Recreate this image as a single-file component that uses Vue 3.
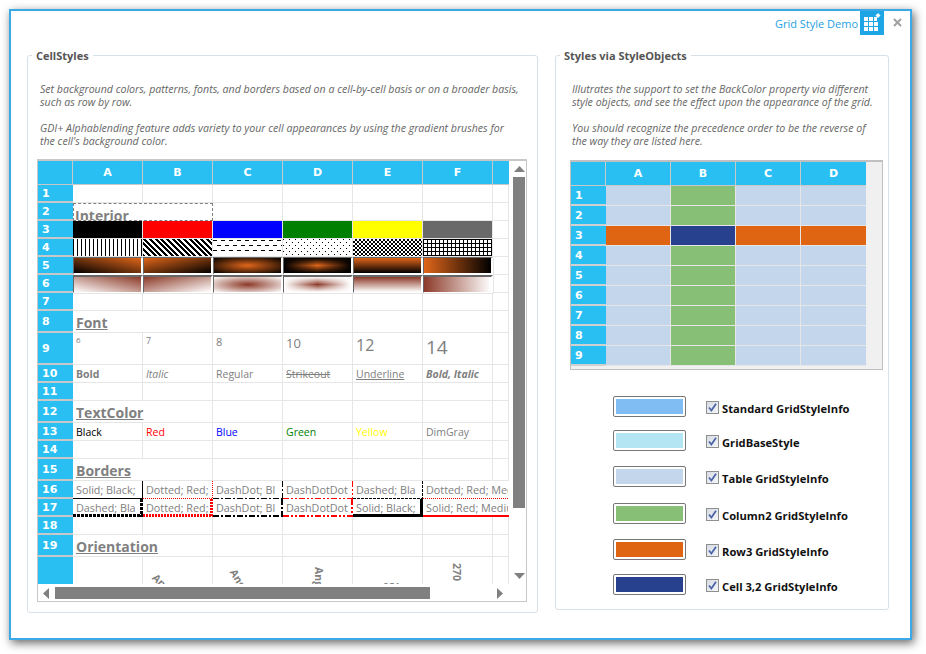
<template>
  <div class="page">
    <div class="window">
      <header class="title-bar">
        <span class="title">Grid Style Demo</span>
        <span class="title-icon">
          <svg width="24" height="24" viewBox="0 0 24 24">
            <g fill="#fff">
              <rect x="4" y="6" width="4" height="4" />
              <rect x="9" y="6" width="4" height="4" />
              <rect x="14" y="6" width="3" height="4" />
              <rect x="4" y="11" width="4" height="4" />
              <rect x="9" y="11" width="4" height="4" />
              <rect x="14" y="11" width="4" height="4" />
              <rect x="4" y="16" width="4" height="4" />
              <rect x="9" y="16" width="4" height="4" />
              <rect x="14" y="16" width="4" height="4" />
              <path d="M18 2l2.5 2.5-2.5 2.5-2.5-2.5z" />
            </g>
          </svg>
        </span>
        <svg class="close" width="9" height="9" viewBox="0 0 9 9">
          <path d="M1 1l7 7M8 1l-7 7" stroke="#a0a0a0" stroke-width="2" />
        </svg>
      </header>

      <div class="content">
        <fieldset class="group group-left">
          <legend>CellStyles</legend>
          <p class="note">Set background colors, patterns, fonts, and borders based on a cell-by-cell basis or on a broader basis,<br />such as row by row.</p>
          <p class="note">GDI+ Alphablending feature adds variety to your cell appearances by using the gradient brushes for<br />the cell's background color.</p>

          <div class="sheet">
            <div class="viewport">
              <div class="row head-row">
                <div class="corner"></div>
                <div v-for="col in sheetCols" :key="col" class="col-head">{{ col }}</div>
              </div>
              <div v-for="row in sheetRows" :key="row.n" class="row" :style="{ height: row.h + 'px' }">
                <div class="row-head">{{ row.n }}</div>
                <div
                  v-for="(cell, i) in row.cells"
                  :key="i"
                  class="cell"
                  :class="[cell.cls, { wide: cell.span }]"
                >
                  <span v-if="cell.angle" class="angle" :class="cell.angle">{{ cell.text }}</span>
                  <template v-else>{{ cell.text }}</template>
                </div>
              </div>
            </div>
            <div class="vscroll">
              <svg class="arrow-svg" width="11" height="6" viewBox="0 0 11 6"><path d="M5.5 0L11 6H0z" fill="#808080" /></svg>
              <div class="vthumb"></div>
              <svg class="arrow-svg down" width="11" height="6" viewBox="0 0 11 6"><path d="M5.5 6L11 0H0z" fill="#808080" /></svg>
            </div>
            <div class="hscroll">
              <svg width="6" height="11" viewBox="0 0 6 11"><path d="M0 5.5L6 0v11z" fill="#808080" /></svg>
              <div class="hthumb"></div>
              <svg class="right" width="6" height="11" viewBox="0 0 6 11"><path d="M6 5.5L0 0v11z" fill="#808080" /></svg>
            </div>
          </div>
        </fieldset>

        <fieldset class="group group-right">
          <legend>Styles via StyleObjects</legend>
          <p class="note">Illutrates the support to set the BackColor property via different<br />style objects, and see the effect upon the appearance of the grid.</p>
          <p class="note">You should recognize the precedence order to be the reverse of<br />the way they are listed here.</p>

          <div class="mini">
            <div class="mini-row mini-head">
              <div class="mini-corner"></div>
              <div v-for="col in miniCols" :key="col" class="mini-col">{{ col }}</div>
            </div>
            <div v-for="n in 9" :key="n" class="mini-row">
              <div class="mini-num">{{ n }}</div>
              <div
                v-for="(col, i) in miniCols"
                :key="col"
                class="mini-cell"
                :class="miniClass(n, i)"
              ></div>
            </div>
          </div>

          <ul class="legend-list">
            <li v-for="item in styleItems" :key="item.label" class="legend-row">
              <span class="swatch"><span class="swatch-fill" :style="{ background: item.color }"></span></span>
              <span class="check">
                <svg width="13" height="13" viewBox="0 0 13 13">
                  <path d="M3 6.5l2.4 3L10 2.8" fill="none" stroke="#4c64a8" stroke-width="1.8" />
                </svg>
              </span>
              <span class="legend-label">{{ item.label }}</span>
            </li>
          </ul>
        </fieldset>
      </div>
    </div>
  </div>
</template>

<script setup>
const sheetCols = ["A", "B", "C", "D", "E", "F", ""];
const miniCols = ["A", "B", "C", "D"];

function line(cls, texts = []) {
  const cells = [];
  for (let i = 0; i < 7; i++) {
    cells.push({ text: texts[i] || "", cls: cls[i] || "" });
  }
  return cells;
}

function titleRow(text, cls = "title-cell") {
  return [
    { text, cls, span: true },
    ...line([]).slice(0, 5)
  ];
}

// the last column of the border rows runs on into the clipped column G
function borderRow(cls, texts) {
  const cells = line(cls, texts).slice(0, 6);
  cells[5].span = true;
  return cells;
}

const sheetRows = [
  { n: 1, h: 18, cells: line([]) },
  { n: 2, h: 18, cells: titleRow("Interior", "title-cell interior") },
  { n: 3, h: 18, cells: line(["fill-black", "fill-red", "fill-blue", "fill-green", "fill-yellow", "fill-gray"]) },
  { n: 4, h: 18, cells: line(["pat-vert", "pat-diag", "pat-dash", "pat-dots", "pat-check", "pat-cross"]) },
  { n: 5, h: 18, cells: line(["orange g-ne", "orange g-nw", "orange g-radial", "orange g-rect", "orange g-down", "orange g-right"]) },
  { n: 6, h: 18, cells: line(["brown g-ne", "brown g-nw", "brown g-radial", "brown g-rect", "brown g-down", "brown g-right"]) },
  { n: 7, h: 18, cells: line([]) },
  { n: 8, h: 22, cells: titleRow("Font") },
  { n: 9, h: 32, cells: line(["size6", "size7", "size8", "size10", "size12", "size14"], ["6", "7", "8", "10", "12", "14"]) },
  { n: 10, h: 18, cells: line(["gray bold", "gray italic", "gray", "gray strike", "gray under", "gray bold italic"], ["Bold", "Italic", "Regular", "Strikeout", "Underline", "Bold, Italic"]) },
  { n: 11, h: 18, cells: line([]) },
  { n: 12, h: 22, cells: titleRow("TextColor") },
  { n: 13, h: 18, cells: line(["t-black", "t-red", "t-blue", "t-green", "t-yellow", "gray"], ["Black", "Red", "Blue", "Green", "Yellow", "DimGray"]) },
  { n: 14, h: 18, cells: line([]) },
  { n: 15, h: 22, cells: titleRow("Borders") },
  {
    n: 16,
    h: 18,
    cells: borderRow(
      ["gray edge solid black thin", "gray edge dotted red thin", "gray edge dashdot black thin", "gray edge dashdotdot red thin", "gray edge dashed black thin", "gray edge dotted red thin open"],
      ["Solid; Black;", "Dotted; Red;", "DashDot; Bl", "DashDotDot", "Dashed; Bla", "Dotted; Red; Medium"]
    )
  },
  {
    n: 17,
    h: 18,
    cells: borderRow(
      ["gray edge dashed black med", "gray edge dotted red med", "gray edge dashdot black mid", "gray edge dashdotdot red mid", "gray edge solid black med", "gray edge solid red mid open"],
      ["Dashed; Bla", "Dotted; Red;", "DashDot; Bl", "DashDotDot", "Solid; Black;", "Solid; Red; Medium"]
    )
  },
  { n: 18, h: 18, cells: line([]) },
  { n: 19, h: 22, cells: titleRow("Orientation") },
  {
    n: "",
    h: 40,
    cells: [
      { text: "", cls: "" },
      { text: "Angle 45", cls: "", angle: "a45" },
      { text: "Angle 60", cls: "", angle: "a60" },
      { text: "Angle 90", cls: "", angle: "a90" },
      { text: "180", cls: "", angle: "a180" },
      { text: "270", cls: "", angle: "a270" },
      { text: "", cls: "" }
    ]
  }
];

const styleItems = [
  { label: "Standard GridStyleInfo", color: "#7fbdf3" },
  { label: "GridBaseStyle", color: "#b3e5f2" },
  { label: "Table GridStyleInfo", color: "#c4d6eb" },
  { label: "Column2 GridStyleInfo", color: "#87bf76" },
  { label: "Row3 GridStyleInfo", color: "#e06513" },
  { label: "Cell 3,2 GridStyleInfo", color: "#28418f" }
];

function miniClass(row, col) {
  if (row === 3) {
    return col === 1 ? "navy" : "rust";
  }
  return col === 1 ? "leaf" : "";
}
</script>

<style>
html,
body {
  margin: 0;
  background: #fff;
}
</style>

<style scoped>
.page {
  width: 926px;
  height: 654px;
  box-sizing: border-box;
  padding: 9px 14px 14px 9px;
  overflow: hidden;
  font-family: "Open Sans", sans-serif;
}

.window {
  height: 100%;
  box-sizing: border-box;
  border: 2px solid #3aa9e6;
  background: #fff;
  box-shadow: 2px 3px 9px rgba(0, 0, 0, 0.6);
}

.title-bar {
  display: flex;
  justify-content: flex-end;
  align-items: flex-start;
  height: 37px;
  padding-right: 8px;
}

.title {
  margin-top: 5px;
  margin-right: 2px;
  font-size: 11px;
  line-height: 15px;
  color: #27a0e2;
}

.title-icon {
  display: block;
  width: 24px;
  height: 24px;
  background: #1ea5e6;
}

.close {
  margin: 7px 0 0 9px;
}

.content {
  display: flex;
  gap: 17px;
  padding-left: 16px;
}

.group {
  box-sizing: border-box;
  min-width: 0;
  margin: 0;
  border: 1px solid #d8e0e8;
  border-radius: 3px;
}

.group-left {
  width: 511px;
  height: 565px;
  padding: 20px 9px 0;
}

.group-right {
  width: 334px;
  height: 562px;
  padding: 20px 5px 0 16px;
}

legend {
  padding: 0 4px;
  font-size: 11px;
  font-weight: 700;
  color: #555;
}

.group-left legend {
  margin-left: -5px;
}

.group-right legend {
  margin-left: -12px;
}

.note {
  margin: 0 0 13px;
  font-size: 10.6px;
  line-height: 13px;
  font-style: italic;
  color: #666;
}

.group-left .note {
  padding-left: 3px;
}

.sheet {
  display: grid;
  grid-template-columns: 471px 17px;
  grid-template-rows: 423px 17px;
  width: 490px;
  box-sizing: border-box;
  margin-top: -2px;
  border: 1px solid #c8c8c8;
  border-top-width: 2px;
}

.viewport {
  overflow: hidden;
}

.row {
  display: grid;
  grid-template-columns: 35px repeat(6, 70px) 16px;
  box-sizing: border-box;
}

.head-row {
  height: 24px;
}

.corner,
.col-head,
.row-head {
  box-sizing: border-box;
  background: #29bff2;
  color: #fff;
  font-family: "DejaVu Sans", sans-serif;
  font-size: 11px;
  font-weight: 700;
}

.corner,
.col-head {
  display: flex;
  align-items: center;
  justify-content: center;
  border-right: 1px solid #c8c8c8;
  border-bottom: 1px solid #c8c8c8;
}

.col-head:last-child {
  border-right: none;
}

.row-head {
  display: flex;
  align-items: center;
  padding-left: 4px;
  border-bottom: 2px solid #c8c8c8;
}

.cell {
  box-sizing: border-box;
  min-width: 0;
  padding: 1px 3px 0;
  overflow: hidden;
  border-right: 1px solid #e6e6e6;
  border-bottom: 1px solid #e6e6e6;
  font-size: 10.5px;
  line-height: 16px;
  white-space: nowrap;
}

.wide {
  grid-column: span 2;
}

.title-cell {
  padding: 0 3px;
  font-size: 14px;
  font-weight: 700;
  line-height: 23px;
  color: #808080;
  text-decoration: underline;
}

.interior {
  padding: 4px 1px 0;
  border: 1px dashed #808080;
  line-height: 16px;
  text-decoration: none;
}

.gray {
  color: #808080;
}

.bold {
  font-weight: 700;
}

.italic {
  font-style: italic;
}

.strike {
  text-decoration: line-through;
}

.under {
  text-decoration: underline;
}

.fill-black { background: #000; }
.fill-red { background: #f00; }
.fill-blue { background: #00f; }
.fill-green { background: #008000; }
.fill-yellow { background: #ff0; }
.fill-gray { background: #696969; }

.pat-vert {
  background: repeating-linear-gradient(90deg, #000 0 1px, #fff 1px 4px);
}

.pat-diag {
  background: repeating-linear-gradient(45deg, #000 0 2px, #fff 2px 4px);
}

.pat-dash {
  background:
    repeating-linear-gradient(90deg, #000 0 4px, #fff 4px 8px) 0 1px / 100% 1px no-repeat,
    repeating-linear-gradient(90deg, #000 0 4px, #fff 4px 8px) 4px 6px / 100% 1px no-repeat,
    repeating-linear-gradient(90deg, #000 0 4px, #fff 4px 8px) 0 11px / 100% 1px no-repeat,
    #fff;
}

.pat-dots {
  background:
    conic-gradient(from 270deg at 1px 1px, #000 25%, transparent 0) 0 0 / 6px 6px,
    conic-gradient(from 270deg at 1px 1px, #000 25%, transparent 0) 3px 3px / 6px 6px,
    #fff;
}

.pat-check {
  background: repeating-conic-gradient(#000 0 25%, #fff 0 50%) 0 0 / 4px 4px;
}

.pat-cross {
  background:
    repeating-linear-gradient(90deg, #000 0 1px, transparent 1px 4px),
    repeating-linear-gradient(0deg, #000 0 1px, #fff 1px 4px);
}

.orange { --from: #e0661a; --to: #000; }
.brown { --from: #8c3a28; --to: #fff; }

.orange,
.brown {
  border-top: 1px solid #666;
  border-left: 1px solid #666;
  border-right: 2px solid #fff;
  border-bottom: 2px solid #fff;
  box-shadow: 1px 1px 0 #e6e6e6;
}

.brown {
  border-top-width: 2px;
  border-bottom-width: 1px;
}

.g-ne { background: linear-gradient(to bottom left, var(--from), var(--to)); }
.g-nw { background: linear-gradient(to bottom right, var(--from), var(--to)); }
.g-radial { background: radial-gradient(ellipse farthest-corner, var(--from), var(--to)); }
.g-down { background: linear-gradient(to bottom, var(--from), var(--to)); }
.g-right { background: linear-gradient(to right, var(--from), var(--to)); }

.g-rect {
  background:
    linear-gradient(to right, var(--to), transparent 50%, var(--to)),
    linear-gradient(to bottom, var(--to), var(--from) 50%, var(--to));
}

.size6 { font-size: 8px; line-height: 12px; color: #808080; }
.size7 { font-size: 9px; line-height: 13px; color: #808080; }
.size8 { font-size: 11px; line-height: 16px; color: #808080; }
.size10 { font-size: 13px; line-height: 18px; color: #808080; }
.size12 { font-size: 16px; line-height: 23px; color: #808080; }
.size14 { font-size: 19px; line-height: 27px; color: #808080; }

.t-black { color: #000; }
.t-red { color: #f00; }
.t-blue { color: #00f; }
.t-green { color: #008000; }
.t-yellow { color: #ff0; }

.black { --c: #000; }
.red { --c: #f00; }
.thin { --w: 1px; }
.mid { --w: 2px; }
.med { --w: 3px; }

.solid { --stops: var(--c) 0 8px; }
.dotted { --stops: var(--c) 0 1px, transparent 1px 2px; }
.dashed { --stops: var(--c) 0 3px, transparent 3px 4px; }
.dashdot { --stops: var(--c) 0 6px, transparent 6px 8px, var(--c) 8px 10px, transparent 10px 12px; }
.dashdotdot { --stops: var(--c) 0 6px, transparent 6px 8px, var(--c) 8px 10px, transparent 10px 12px, var(--c) 12px 14px, transparent 14px 16px; }

.dotted.med { --stops: var(--c) 0 2px, transparent 2px 3px; }

.edge {
  border-color: transparent;
  font-size: 10.8px;
  background-image:
    repeating-linear-gradient(90deg, var(--stops)),
    repeating-linear-gradient(180deg, var(--stops));
  background-size: 100% var(--w), var(--w) 100%;
  background-position: left bottom, right top;
  background-repeat: no-repeat;
  background-origin: border-box;
  background-clip: border-box;
}

.edge.open {
  background-size: 100% var(--w), 0 0;
}

.angle {
  display: block;
  width: max-content;
  font-size: 10.5px;
  font-weight: 700;
  color: #808080;
  transform-origin: 0 0;
}

.a45 { margin: 12px 0 0 14px; transform: rotate(45deg); }
.a60 { margin: 8px 0 0 24px; transform: rotate(60deg); }
.a90 { margin: 9px 0 0 41px; transform: rotate(90deg); }
.a180 { margin: 37px 0 0 45px; transform: rotate(180deg); }
.a270 { margin: 5px 0 0 39px; transform: rotate(90deg); }

.vscroll {
  display: flex;
  flex-direction: column;
  align-items: center;
  padding: 5px 0 5px 3px;
}

.vthumb {
  width: 12px;
  height: 331px;
  margin-top: 5px;
  background: #808080;
}

.arrow-svg.down {
  margin-top: auto;
}

.hscroll {
  display: flex;
  align-items: center;
  padding: 3px 0 2px 5px;
  grid-column: 1 / -1;
}

.hthumb {
  width: 375px;
  height: 12px;
  margin-left: 6px;
  background: #808080;
}

.right {
  margin-left: 67px;
}

.mini {
  width: 313px;
  height: 210px;
  box-sizing: border-box;
  margin-top: -1px;
  margin-left: -2px;
  border: 1px solid #c0c0c0;
  border-top-width: 2px;
  background: #f0f0f0;
}

.mini-row {
  display: grid;
  grid-template-columns: 35px repeat(4, 65px);
  height: 20px;
}

.mini-head {
  height: 24px;
}

.mini-corner,
.mini-col,
.mini-num {
  box-sizing: border-box;
  background: #29bff2;
  color: #fff;
  font-family: "DejaVu Sans", sans-serif;
  font-size: 11px;
  font-weight: 700;
}

.mini-corner,
.mini-col {
  display: flex;
  align-items: center;
  justify-content: center;
  border-right: 1px solid #c8c8c8;
  border-bottom: 1px solid #c8c8c8;
}

.mini-col:last-child {
  border-right: none;
}

.mini-num {
  display: flex;
  align-items: center;
  padding-left: 4px;
  border-bottom: 2px solid #d0d0d0;
}

.mini-cell {
  box-sizing: border-box;
  background: #c4d6eb;
  border-right: 1px solid #e6e6e6;
  border-bottom: 1px solid #e6e6e6;
}

.mini-cell:last-child {
  border-right: none;
}

.leaf { background: #87bf76; }
.rust { background: #e06513; }
.navy { background: #28418f; }

.legend-list {
  display: grid;
  grid-template-rows: 34px 36px 37px 36px 35px 20px;
  margin: 26px 0 0;
  padding: 0 0 0 41px;
  list-style: none;
}

.legend-row {
  display: flex;
  align-items: flex-start;
}

.swatch {
  display: block;
  box-sizing: border-box;
  width: 73px;
  height: 21px;
  padding: 2px;
  border: 1px solid #777;
  border-radius: 2px;
}

.swatch-fill {
  display: block;
  height: 100%;
}

.check {
  display: block;
  box-sizing: border-box;
  width: 13px;
  height: 13px;
  margin: 5px 3px 0 20px;
  border: 1px solid #8e8f8f;
  background: linear-gradient(135deg, #d8dce4, #f4f6f8);
}

.check svg {
  display: block;
  margin: -1px;
}

.legend-label {
  margin-top: 5px;
  font-size: 11.2px;
  font-weight: 700;
  line-height: 16px;
  color: #111;
}
</style>
